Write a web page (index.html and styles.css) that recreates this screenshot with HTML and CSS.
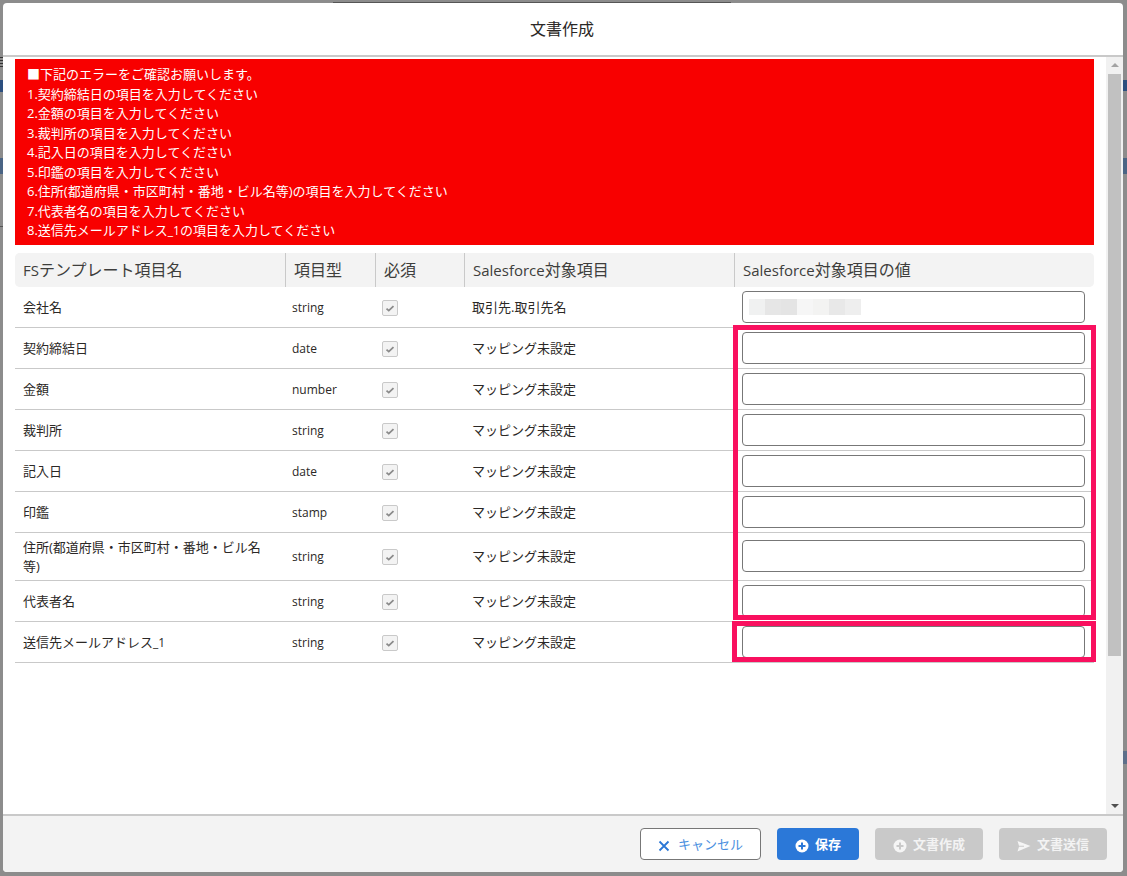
FILE: index.html
```html
<!DOCTYPE html>
<html lang="ja">
<head>
<meta charset="utf-8">
<title>文書作成</title>
<link rel="stylesheet" href="styles.css">
</head>
<body>
<div class="backdrop-mark mark-top"></div>
<div class="backdrop-mark mark-l0"></div>
<div class="backdrop-mark mark-l1"></div>
<div class="backdrop-mark mark-l2"></div>
<div class="backdrop-mark mark-l3"></div>
<div class="backdrop-mark mark-r1"></div>
<div class="backdrop-mark mark-r2"></div>
<div class="backdrop-mark mark-r3"></div>
<div class="modal">
  <header class="modal-header">文書作成</header>
  <div class="modal-body">
    <div class="content">
      <div class="errors">
        <div>■下記のエラーをご確認お願いします。</div>
        <div>1.契約締結日の項目を入力してください</div>
        <div>2.金額の項目を入力してください</div>
        <div>3.裁判所の項目を入力してください</div>
        <div>4.記入日の項目を入力してください</div>
        <div>5.印鑑の項目を入力してください</div>
        <div>6.住所(都道府県・市区町村・番地・ビル名等)の項目を入力してください</div>
        <div>7.代表者名の項目を入力してください</div>
        <div>8.送信先メールアドレス<span class="lat-sm">_1</span>の項目を入力してください</div>
      </div>
      <table class="grid">
        <colgroup>
          <col class="c1"><col class="c2"><col class="c3"><col class="c4"><col class="c5">
        </colgroup>
        <thead>
          <tr>
            <th><span class="lat">FS</span>テンプレート項目名</th>
            <th>項目型</th>
            <th>必須</th>
            <th><span class="lat">Salesforce</span>対象項目</th>
            <th><span class="lat">Salesforce</span>対象項目の値</th>
          </tr>
        </thead>
        <tbody>
          <tr>
            <td>会社名</td><td>string</td>
            <td><span class="check"><svg viewBox="0 0 16 16"><path d="M4 8.6l2.6 2.4L12 5.8" /></svg></span></td>
            <td>取引先.取引先名</td>
            <td><div class="field"><span class="blur"><i class="b1"></i><i class="b2"></i><i class="b3"></i><i class="b4"></i><i class="b5"></i><i class="b6"></i><i class="b7"></i></span></div></td>
          </tr>
          <tr>
            <td>契約締結日</td><td>date</td>
            <td><span class="check"><svg viewBox="0 0 16 16"><path d="M4 8.6l2.6 2.4L12 5.8" /></svg></span></td>
            <td>マッピング未設定</td><td><div class="field"></div></td>
          </tr>
          <tr>
            <td>金額</td><td>number</td>
            <td><span class="check"><svg viewBox="0 0 16 16"><path d="M4 8.6l2.6 2.4L12 5.8" /></svg></span></td>
            <td>マッピング未設定</td><td><div class="field"></div></td>
          </tr>
          <tr>
            <td>裁判所</td><td>string</td>
            <td><span class="check"><svg viewBox="0 0 16 16"><path d="M4 8.6l2.6 2.4L12 5.8" /></svg></span></td>
            <td>マッピング未設定</td><td><div class="field"></div></td>
          </tr>
          <tr>
            <td>記入日</td><td>date</td>
            <td><span class="check"><svg viewBox="0 0 16 16"><path d="M4 8.6l2.6 2.4L12 5.8" /></svg></span></td>
            <td>マッピング未設定</td><td><div class="field"></div></td>
          </tr>
          <tr>
            <td>印鑑</td><td>stamp</td>
            <td><span class="check"><svg viewBox="0 0 16 16"><path d="M4 8.6l2.6 2.4L12 5.8" /></svg></span></td>
            <td>マッピング未設定</td><td><div class="field"></div></td>
          </tr>
          <tr class="tall">
            <td>住所(都道府県・市区町村・番地・ビル名等)</td><td>string</td>
            <td><span class="check"><svg viewBox="0 0 16 16"><path d="M4 8.6l2.6 2.4L12 5.8" /></svg></span></td>
            <td>マッピング未設定</td><td><div class="field"></div></td>
          </tr>
          <tr>
            <td>代表者名</td><td>string</td>
            <td><span class="check"><svg viewBox="0 0 16 16"><path d="M4 8.6l2.6 2.4L12 5.8" /></svg></span></td>
            <td>マッピング未設定</td><td><div class="field"></div></td>
          </tr>
          <tr>
            <td>送信先メールアドレス<span class="lat-sm">_1</span></td><td>string</td>
            <td><span class="check"><svg viewBox="0 0 16 16"><path d="M4 8.6l2.6 2.4L12 5.8" /></svg></span></td>
            <td>マッピング未設定</td><td><div class="field"></div></td>
          </tr>
        </tbody>
      </table>
    </div>
    <div class="scrollbar">
      <span class="arrow-up"></span>
      <div class="thumb"></div>
      <span class="arrow-down"></span>
    </div>
    <div class="callout callout-a"></div>
    <div class="callout callout-b"></div>
  </div>
  <footer class="modal-footer">
    <button class="btn btn-outline"><svg class="icon" viewBox="0 0 12 12"><path d="M1.5 1.5l9 9M10.5 1.5l-9 9" class="x"/></svg>キャンセル</button>
    <button class="btn btn-primary"><svg class="icon" viewBox="0 0 14 14"><circle cx="7" cy="7" r="6.5" class="disc"/><path d="M7 3.5v7M3.5 7h7" class="plus"/></svg>保存</button>
    <button class="btn btn-disabled"><svg class="icon" viewBox="0 0 14 14"><circle cx="7" cy="7" r="6.5" class="disc"/><path d="M7 3.5v7M3.5 7h7" class="plus-off"/></svg>文書作成</button>
    <button class="btn btn-disabled"><svg class="icon" viewBox="0 0 14 14"><path d="M0.5 2L13.5 7 0.5 12.5 2 7.8H7V6.8H2z" class="disc"/></svg>文書送信</button>
  </footer>
</div>
</body>
</html>
```
FILE: styles.css
```css
* { box-sizing: border-box; }
html, body { margin: 0; height: 100%; }
body {
  position: relative;
  width: 1127px;
  height: 876px;
  padding: 3px 4px 3px 3px;
  overflow: hidden;
  background: #8c8c8c;
  font-family: "Open Sans", "Noto Sans CJK JP", sans-serif;
  color: #2b2826;
}
.backdrop-mark { position: absolute; }
.mark-top { left: 333px; top: 2px; width: 398px; height: 1px; background: #555; }
.mark-l0 { left: 0; top: 57px; width: 3px; height: 10px; background: repeating-linear-gradient(#333 0 1px, #8c8c8c 1px 3px); }
.mark-l1 { left: 0; top: 80px; width: 3px; height: 12px; background: #2c4f7f; }
.mark-l2 { left: 0; top: 158px; width: 3px; height: 16px; background: #4a6484; }
.mark-l3 { left: 0; top: 226px; width: 3px; height: 1px; background: #555; }
.mark-r1 { left: 1123px; top: 80px; width: 4px; height: 11px; background: #2c4f7f; }
.mark-r2 { left: 1123px; top: 158px; width: 4px; height: 16px; background: #4a6484; }
.mark-r3 { left: 1123px; top: 751px; width: 4px; height: 13px; background: #5d6f8a; }

.modal {
  display: flex;
  flex-direction: column;
  width: 1120px;
  height: 869px;
  border-radius: 4px;
  overflow: hidden;
  background: #fff;
}
.modal-header {
  flex: none;
  height: 54px;
  padding: 13px 2px 0 0;
  border-bottom: 2px solid #c9c9c9;
  text-align: center;
  font-size: 16px;
  line-height: 26px;
  color: #2b2826;
}
.modal-body {
  position: relative;
  flex: 1;
  display: flex;
  min-height: 0;
}
.content { flex: 1; padding: 2px 12px 0; min-width: 0; }
.errors {
  height: 186px;
  padding: 6px 12px 0;
  background: #f80000;
  color: #fff;
  font-size: 13px;
  line-height: 19.5px;
}
.lat { font-size: 15px; }
.lat-sm { font-size: 12px; }
.grid {
  width: 1079px;
  margin-top: 8px;
  border-collapse: separate;
  border-spacing: 0;
  table-layout: fixed;
}
.c1 { width: 270px; }
.c2 { width: 90px; }
.c3 { width: 89px; }
.c4 { width: 270px; }
.c5 { width: 360px; }
.grid th {
  height: 34px;
  padding: 0 8px;
  background: #f3f3f3;
  border-left: 1px solid #c9c9c9;
  background-clip: padding-box;
  text-align: left;
  font-size: 16px;
  font-weight: 400;
  line-height: 20px;
  color: #3e3e3c;
  box-shadow: inset 0 1px 0 #f3f3f3, inset 0 -1px 0 #f3f3f3;
}
.grid th:first-child { border-left: 0; border-radius: 5px 0 0 5px; }
.grid th:last-child { border-radius: 0 5px 5px 0; }
.grid td {
  height: 41px;
  padding: 0 7px;
  border-bottom: 1px solid #c9c9c9;
  font-size: 13px;
  line-height: 19px;
  color: #2b2826;
  vertical-align: middle;
}
.grid td:nth-child(1) { padding-left: 8px; padding-right: 16px; }
.grid td:nth-child(2) { font-size: 12px; }
.grid td:nth-child(3) { line-height: 0; padding-top: 1px; }
.grid td:nth-child(4) { padding-left: 8px; }
.grid td:nth-child(5) { padding: 0 9px 1px 8px; }
.grid .tall td { height: 48px; }
.check {
  display: inline-block;
  width: 16px;
  height: 16px;
  border: 1px solid #c9c9c9;
  border-radius: 2px;
  background: #f3f3f3;
}
.check svg { display: block; width: 14px; height: 14px; }
.check path { fill: none; stroke: #8a8a8a; stroke-width: 2; }
.field {
  width: 343px;
  height: 32px;
  padding: 7px 6px;
  border: 1px solid #777;
  border-radius: 4px;
  background: #fff;
}
.blur { display: flex; height: 16px; }
.blur i { width: 16px; height: 16px; }
.b1 { background: #f0f1f1; }
.b2 { background: #e6e6e6; }
.b3 { background: #e4e4e4; }
.b4 { background: #f6f6f6; }
.b5 { background: #f3f3f2; }
.b6 { background: #e8e8e8; }
.b7 { background: #eeeeee; }

.scrollbar {
  position: relative;
  flex: none;
  width: 17px;
  background: #f1f1f1;
}
.thumb {
  position: absolute;
  left: 2px;
  top: 17px;
  width: 13px;
  height: 582px;
  background: #c1c1c1;
}
.arrow-up, .arrow-down {
  position: absolute;
  left: 5px;
  width: 0;
  height: 0;
  border-left: 4px solid transparent;
  border-right: 4px solid transparent;
}
.arrow-up { top: 6px; border-bottom: 4px solid #a3a3a3; }
.arrow-down { bottom: 6px; border-top: 4px solid #505050; }

.callout {
  position: absolute;
  border: 5px solid #f9105f;
  pointer-events: none;
}
.callout-a { left: 730px; top: 268px; width: 363px; height: 295px; }
.callout-b { left: 729px; top: 564px; width: 364px; height: 41px; }

.modal-footer {
  flex: none;
  display: flex;
  justify-content: flex-end;
  gap: 16px;
  height: 58px;
  padding: 12px 16px 0 0;
  border-top: 2px solid #c9c9c9;
  background: #f3f3f3;
}
.btn {
  display: flex;
  align-items: center;
  justify-content: center;
  height: 32px;
  padding: 0;
  border: 1px solid transparent;
  border-radius: 4px;
  font-family: inherit;
  font-size: 13px;
  line-height: 20px;
}
.btn:nth-child(1) { width: 121px; }
.btn:nth-child(2) { width: 82px; font-weight: 700; }
.btn:nth-child(3), .btn:nth-child(4) { width: 108px; font-weight: 700; }
.icon { flex: none; width: 14px; height: 14px; margin: 4px 6px 0 0; }
.btn-outline { background: #fff; border-color: #777; color: #4a8fe0; font-weight: 400; }
.btn-outline .icon { width: 12px; height: 12px; margin: 4px 8px 0 0; }
.x { fill: none; stroke: #2b77d6; stroke-width: 1.8; }
.btn-primary { background: #2b78d8; color: #fff; }
.btn-disabled { background: #c9c9c9; color: #f3f3f3; }
.disc { fill: #f5f5f5; }
.btn-primary .disc { fill: #fff; }
.plus { fill: none; stroke: #2b78d8; stroke-width: 2; }
.plus-off { fill: none; stroke: #c9c9c9; stroke-width: 2; }
```
